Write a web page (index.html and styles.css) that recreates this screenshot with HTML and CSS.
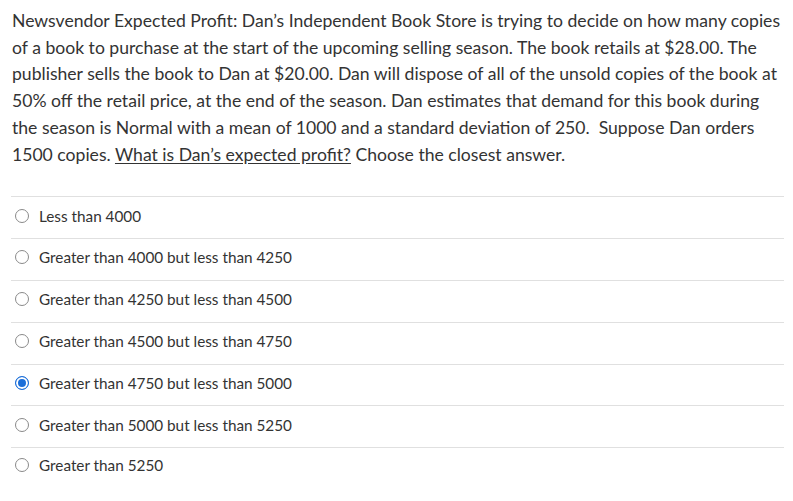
FILE: index.html
```html
<!DOCTYPE html>
<html>
<head>
<meta charset="utf-8">
<link rel="stylesheet" href="styles.css">
</head>
<body>
<div class="question">
  <p class="prompt">Newsvendor Expected Profit: Dan’s Independent Book Store is trying to decide on how many copies of a book to purchase at the start of the upcoming selling season. The book retails at $28.00. The publisher sells the book to Dan at $20.00. Dan will dispose of all of the unsold copies of the book at 50% off the retail price, at the end of the season. Dan estimates that demand for this book during the season is Normal with a mean of 1000 and a standard deviation of 250.&nbsp; Suppose Dan orders 1500 copies. <span class="u">What is Dan’s expected profit?</span> Choose the closest answer.</p>
  <div class="answers">
    <label class="answer"><span class="radio"></span><span>Less than 4000</span></label>
    <label class="answer"><span class="radio"></span><span>Greater than 4000 but less than 4250</span></label>
    <label class="answer"><span class="radio"></span><span>Greater than 4250 but less than 4500</span></label>
    <label class="answer"><span class="radio"></span><span>Greater than 4500 but less than 4750</span></label>
    <label class="answer"><span class="radio checked"></span><span>Greater than 4750 but less than 5000</span></label>
    <label class="answer"><span class="radio"></span><span>Greater than 5000 but less than 5250</span></label>
    <label class="answer"><span class="radio"></span><span>Greater than 5250</span></label>
  </div>
</div>
</body>
</html>
```
FILE: styles.css
```css
html, body {
  margin: 0;
  padding: 0;
  background: #fff;
}
body {
  font-family: Lato, "Liberation Sans", sans-serif;
  color: #333;
}
.question {
  width: 773px;
  padding: 8px 0 0 11px;
}
.prompt {
  margin: 0 0 28px 1px;
  font-size: 17.6px;
  line-height: 26.7px;
}
.u {
  text-decoration: underline;
  text-underline-offset: 2px;
}
.answers {
  display: flex;
  flex-direction: column;
}
.answer {
  box-sizing: border-box;
  display: flex;
  align-items: center;
  gap: 10px;
  height: 41.83px;
  border-top: 1px solid #e0e0e0;
  padding: 0 0 4px 4px;
  font-size: 15.3px;
}
.answer:last-child {
  height: 38px;
}
.radio {
  width: 12px;
  height: 12px;
  border: 1px solid #8a8a8a;
  border-radius: 50%;
  box-sizing: content-box;
  flex: none;
}
.radio.checked {
  border-color: #1c6fd9;
  background: #1c6fd9;
  box-shadow: inset 0 0 0 2px #fff;
}
```
